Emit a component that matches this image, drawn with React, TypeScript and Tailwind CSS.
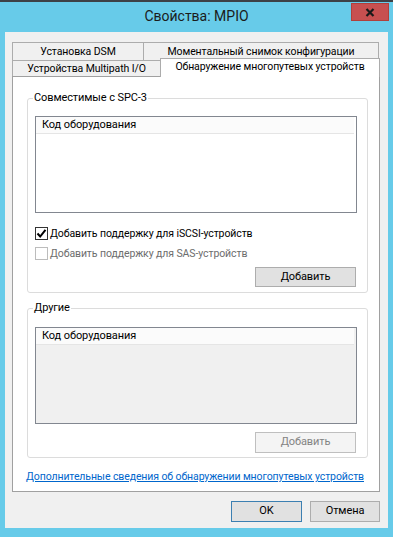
import React from "react";

const font = "font-['Roboto','Noto_Sans',sans-serif]";

function Btn({ label, disabled, primary, className = "" }: { label: string; disabled?: boolean; primary?: boolean; className?: string }) {
  return (
    <div
      className={
        "flex items-center justify-center border " +
        (disabled
          ? "bg-[#f4f4f4] border-[#bfbfbf] text-[#838383] "
          : primary
          ? "bg-[#e1e1e1] border-[#3c7fb1] text-black "
          : "bg-[#e1e1e1] border-[#adadad] text-black ") +
        className
      }
    >
      {label}
    </div>
  );
}

function Check({ checked, disabled }: { checked?: boolean; disabled?: boolean }) {
  return (
    <div
      className={
        "w-[13px] h-[13px] border flex items-center justify-center bg-white " +
        (disabled ? "border-[#bcbcbc]" : "border-[#333333]")
      }
    >
      {checked && (
        <svg width="11" height="11" viewBox="0 0 11 11">
          <path d="M1.5 5.5 L4.2 8.5 L9.5 1.8" fill="none" stroke="#000" strokeWidth="2" />
        </svg>
      )}
    </div>
  );
}

function ListBox({ disabled }: { disabled?: boolean }) {
  return (
    <div
      className={
        "ml-[7px] w-[322px] h-[97px] border border-[#828790] flex flex-col " +
        (disabled ? "bg-[#f0f0f0]" : "bg-white")
      }
    >
      <div className="h-[17px] mr-[2px] bg-[#fbfbfb] border-b border-[#e5e5e5] pl-[6px] flex items-center text-black text-[11px]">
        Код оборудования
      </div>
    </div>
  );
}

export default function App() {
  return (
    <div className={"w-[393px] h-[537px] bg-[#67cbe9] flex flex-col text-[10.5px] tracking-[-0.1px] text-black " + font}>
      <div className="h-[2px] bg-[#3d4146]" />
      <div className="relative h-[30px] flex items-center justify-center">
        <span className="text-[14px] tracking-normal text-[#1b1b1b] -mt-[2px]">Свойства: MPIO</span>
        <div className="absolute right-[4px] top-[1px] w-[38px] h-[18px] bg-[#c75050] border border-[#b0403c] flex items-center justify-center">
          <svg width="10" height="9" viewBox="0 0 10 9">
            <path d="M1.5 1 L8.5 8 M8.5 1 L1.5 8" stroke="#1a1a1a" strokeWidth="2.2" />
          </svg>
        </div>
      </div>

      <div className="mx-[5px] h-[496px] bg-[#f0f0f0] flex flex-col">
        {/* tabs */}
        <div className="mt-[10px] ml-[7px] flex flex-col">
          <div className="flex h-[18px]">
            <div className="w-[132px] border-l border-t border-r border-[#acacac] flex items-center justify-center">
              Установка DSM
            </div>
            <div className="-ml-px w-[236px] border-l border-t border-r border-[#acacac] flex items-center justify-center">
              Моментальный снимок конфигурации
            </div>
          </div>
          <div className="flex h-[16px]">
            <div className="w-[149px] border-l border-t border-r border-[#acacac] flex items-center justify-center">
              Устройства Multipath I/O
            </div>
            <div className="relative z-10 -ml-px -mt-[2px] w-[220px] h-[19px] bg-white border-l border-t border-r border-[#acacac] flex items-center justify-center pb-[2px]">
              Обнаружение многопутевых устройств
            </div>
          </div>
        </div>

        {/* panel */}
        <div className="ml-[7px] w-[368px] h-[416px] bg-white border border-[#a0a0a0] flex flex-col">
          <fieldset className="mt-[13px] ml-[14px] w-[341px] border border-[#dcdcdc] rounded-[3px] pb-[5px]">
            <legend className="ml-[5px] px-px leading-[16px] text-[11px]">Совместимые с SPC-3</legend>
            <div className="mt-[10px]">
              <ListBox />
            </div>
            <div className="mt-[14px] ml-[7px] flex items-center gap-[2px] h-[13px]">
              <Check checked />
              <span>Добавить поддержку для iSCSI-устройств</span>
            </div>
            <div className="mt-[7px] ml-[7px] flex items-center gap-[2px] h-[13px]">
              <Check disabled />
              <span className="text-[#6d6d6d]">Добавить поддержку для SAS-устройств</span>
            </div>
            <div className="mt-[7px] flex justify-end pr-[11px]">
              <Btn label="Добавить" className="w-[101px] h-[20px] text-[11px]" />
            </div>
          </fieldset>

          <fieldset className="mt-[7px] ml-[14px] w-[341px] border border-[#dcdcdc] rounded-[3px] pb-[4px]">
            <legend className="ml-[5px] px-px leading-[16px] text-[11px]">Другие</legend>
            <div className="mt-[11px]">
              <ListBox disabled />
            </div>
            <div className="mt-[8px] flex justify-end pr-[11px]">
              <Btn label="Добавить" disabled className="w-[101px] h-[21px] text-[11px]" />
            </div>
          </fieldset>

          <div className="mt-[11px] ml-[13px] leading-[16px] text-[#0066cc] underline whitespace-nowrap">
            Дополнительные сведения об обнаружении многопутевых устройств
          </div>
        </div>

        {/* footer */}
        <div className="mt-[9px] flex justify-end gap-[8px] pr-[8px]">
          <Btn label="OK" primary className="w-[71px] h-[21px] text-[11px]" />
          <Btn label="Отмена" className="w-[70px] h-[21px] text-[11px]" />
        </div>
      </div>
    </div>
  );
}
